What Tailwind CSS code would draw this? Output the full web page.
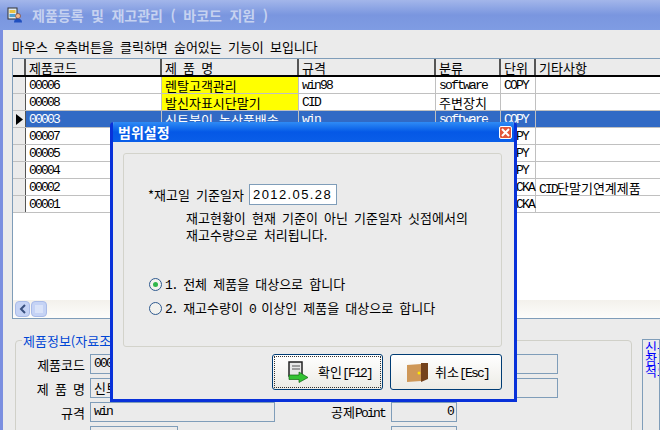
<!DOCTYPE html>
<html lang="ko">
<head>
<meta charset="UTF-8">
<title>제품등록 및 재고관리</title>
<script src="https://cdn.jsdelivr.net/npm/@tailwindcss/browser@4"></script>
</head>
<body class="w-[660px] h-[430px] overflow-hidden relative bg-[#ebebeb] font-['Noto_Sans_CJK_KR',sans-serif] text-[13px] leading-[17px] text-black [word-spacing:2.5px]">

<!-- main window -->
<div class="h-[430px] flex flex-col border-l-[3px] border-[#7b8fe0]">
  <div class="-ml-[3px] h-[30px] shrink-0 flex items-center pl-[7px] gap-[9px] bg-gradient-to-b from-[#a3b6ea] via-[#7a96df] to-[#7f9ce3]">
    <svg width="16" height="16" viewBox="0 0 16 16">
      <rect x="1" y="1" width="9" height="11" fill="#dfe8f0" stroke="#333"/>
      <rect x="2.500" y="3" width="6" height="3" fill="#e8c040"/>
      <rect x="2.500" y="7" width="6" height="3" fill="#50a0d0"/>
      <circle cx="11" cy="9" r="2.500" fill="#f0b890" stroke="#703020" stroke-width="0.6"/>
      <path d="M7 15.500c0-3 2-4 4-4s4 1 4 4z" fill="#2050c0"/>
    </svg>
    <span class="text-[14px] leading-[30px] font-bold text-[#c6d2f0] [word-spacing:3.6px]">제품등록 및 재고관리 ( 바코드 지원 )</span>
  </div>

  <div class="h-[28px] pl-[9px] pt-[8px] shrink-0">마우스 우측버튼을 클릭하면 숨어있는 기능이 보입니다</div>

  <!-- product grid -->
  <div class="ml-[9px] h-[261px] shrink-0 bg-white border border-r-0 border-[#7f9db9] flex flex-col">
    <div class="h-[18px] flex bg-[#ebebeb] border-b-2 border-black">
      <div class="w-[13px] border-r-2 border-[#555]"></div>
      <div class="w-[136px] pl-[3px] border-r-2 border-[#555]">제품코드</div>
      <div class="w-[137px] pl-[3px] border-r-2 border-[#555]">제 품 명</div>
      <div class="w-[137px] pl-[3px] border-r-2 border-[#555]">규격</div>
      <div class="w-[65px] pl-[3px] border-r-2 border-[#555]">분류</div>
      <div class="w-[35px] pl-[3px] border-r-2 border-[#555]">단위</div>
      <div class="pl-[3px]">기타사항</div>
    </div>

    <div class="h-[17px] flex border-b border-[#c0c0c0]">
      <div class="w-[13px] bg-[#ebebeb] border-r border-[#555]"></div>
      <div class="w-[136px] pl-[3px] border-r border-[#c0c0c0] font-['Liberation_Mono'] tracking-[-1.8px]">00006</div>
      <div class="w-[137px] pl-[3px] border-r border-[#c0c0c0] bg-[#ffff00]">렌탈고객관리</div>
      <div class="w-[137px] pl-[3px] border-r border-[#c0c0c0] font-['Liberation_Mono'] tracking-[-1.8px]">win98</div>
      <div class="w-[65px] pl-[3px] border-r border-[#c0c0c0] font-['Liberation_Mono'] tracking-[-1.8px]">software</div>
      <div class="w-[35px] pl-[3px] border-r border-[#c0c0c0] font-['Liberation_Mono'] tracking-[-1.8px]">COPY</div>
      <div class="flex-1"></div>
    </div>
    <div class="h-[17px] flex border-b border-[#c0c0c0]">
      <div class="w-[13px] bg-[#ebebeb] border-r border-[#555]"></div>
      <div class="w-[136px] pl-[3px] border-r border-[#c0c0c0] font-['Liberation_Mono'] tracking-[-1.8px]">00008</div>
      <div class="w-[137px] pl-[3px] border-r border-[#c0c0c0] bg-[#ffff00]">발신자표시단말기</div>
      <div class="w-[137px] pl-[3px] border-r border-[#c0c0c0] font-['Liberation_Mono'] tracking-[-1.8px]">CID</div>
      <div class="w-[65px] pl-[3px] border-r border-[#c0c0c0]">주변장치</div>
      <div class="w-[35px] border-r border-[#c0c0c0]"></div>
      <div class="flex-1"></div>
    </div>
    <div class="h-[17px] flex border-b border-[#c0c0c0] bg-[#316ac5] text-white">
      <div class="w-[13px] bg-[#ebebeb] border-r border-[#555] flex items-center justify-center">
        <svg width="7" height="11" viewBox="0 0 7 11"><path d="M0 0l7 5.500-7 5.500z" fill="#000"/></svg>
      </div>
      <div class="w-[136px] pl-[3px] border-r border-[#c0c0c0] font-['Liberation_Mono'] tracking-[-1.8px]">00003</div>
      <div class="w-[137px] pl-[3px] border-r border-[#c0c0c0]">신토불이 농산품배송</div>
      <div class="w-[137px] pl-[3px] border-r border-[#c0c0c0] font-['Liberation_Mono'] tracking-[-1.8px]">win</div>
      <div class="w-[65px] pl-[3px] border-r border-[#c0c0c0] font-['Liberation_Mono'] tracking-[-1.8px]">software</div>
      <div class="w-[35px] pl-[3px] border-r border-[#c0c0c0] font-['Liberation_Mono'] tracking-[-1.8px]">COPY</div>
      <div class="flex-1"></div>
    </div>
    <div class="h-[17px] flex border-b border-[#c0c0c0]">
      <div class="w-[13px] bg-[#ebebeb] border-r border-[#555]"></div>
      <div class="w-[136px] pl-[3px] border-r border-[#c0c0c0] font-['Liberation_Mono'] tracking-[-1.8px]">00007</div>
      <div class="w-[137px] border-r border-[#c0c0c0]"></div>
      <div class="w-[137px] border-r border-[#c0c0c0]"></div>
      <div class="w-[65px] border-r border-[#c0c0c0]"></div>
      <div class="w-[35px] pl-[3px] border-r border-[#c0c0c0] font-['Liberation_Mono'] tracking-[-1.8px]">COPY</div>
      <div class="flex-1"></div>
    </div>
    <div class="h-[17px] flex border-b border-[#c0c0c0]">
      <div class="w-[13px] bg-[#ebebeb] border-r border-[#555]"></div>
      <div class="w-[136px] pl-[3px] border-r border-[#c0c0c0] font-['Liberation_Mono'] tracking-[-1.8px]">00005</div>
      <div class="w-[137px] border-r border-[#c0c0c0]"></div>
      <div class="w-[137px] border-r border-[#c0c0c0]"></div>
      <div class="w-[65px] border-r border-[#c0c0c0]"></div>
      <div class="w-[35px] pl-[3px] border-r border-[#c0c0c0] font-['Liberation_Mono'] tracking-[-1.8px]">COPY</div>
      <div class="flex-1"></div>
    </div>
    <div class="h-[17px] flex border-b border-[#c0c0c0]">
      <div class="w-[13px] bg-[#ebebeb] border-r border-[#555]"></div>
      <div class="w-[136px] pl-[3px] border-r border-[#c0c0c0] font-['Liberation_Mono'] tracking-[-1.8px]">00004</div>
      <div class="w-[137px] border-r border-[#c0c0c0]"></div>
      <div class="w-[137px] border-r border-[#c0c0c0]"></div>
      <div class="w-[65px] border-r border-[#c0c0c0]"></div>
      <div class="w-[35px] pl-[3px] border-r border-[#c0c0c0] font-['Liberation_Mono'] tracking-[-1.8px]">COPY</div>
      <div class="flex-1"></div>
    </div>
    <div class="h-[17px] flex border-b border-[#c0c0c0]">
      <div class="w-[13px] bg-[#ebebeb] border-r border-[#555]"></div>
      <div class="w-[136px] pl-[3px] border-r border-[#c0c0c0] font-['Liberation_Mono'] tracking-[-1.8px]">00002</div>
      <div class="w-[137px] border-r border-[#c0c0c0]"></div>
      <div class="w-[137px] border-r border-[#c0c0c0]"></div>
      <div class="w-[65px] border-r border-[#c0c0c0]"></div>
      <div class="w-[35px] pl-[3px] border-r border-[#c0c0c0] font-['Liberation_Mono'] tracking-[-1.8px]">PACKA</div>
      <div class="flex-1 pl-[3px]"><span class="font-['Liberation_Mono'] tracking-[-1.8px]">CID</span>단말기연계제품</div>
    </div>
    <div class="h-[17px] flex border-b border-[#c0c0c0]">
      <div class="w-[13px] bg-[#ebebeb] border-r border-[#555]"></div>
      <div class="w-[136px] pl-[3px] border-r border-[#c0c0c0] font-['Liberation_Mono'] tracking-[-1.8px]">00001</div>
      <div class="w-[137px] border-r border-[#c0c0c0]"></div>
      <div class="w-[137px] border-r border-[#c0c0c0]"></div>
      <div class="w-[65px] border-r border-[#c0c0c0]"></div>
      <div class="w-[35px] pl-[3px] border-r border-[#c0c0c0] font-['Liberation_Mono'] tracking-[-1.8px]">PACKA</div>
      <div class="flex-1"></div>
    </div>
    <div class="flex-1"></div>
    <div class="h-[18px] flex items-stretch pl-[2px] py-[1px] gap-[1px] bg-gradient-to-b from-[#f3f1ec] to-[#fdfdfb]">
      <div class="w-[15px] rounded-sm bg-[#c5d3f5] border border-[#a9bbe8] flex items-center justify-center">
        <svg width="8" height="10" viewBox="0 0 8 10"><path d="M6 1L2 5l4 4" fill="none" stroke="#39507f" stroke-width="2"/></svg>
      </div>
      <div class="w-[16px] rounded-sm bg-[#c5d3f5] border border-[#a9bbe8] flex items-center justify-center">
        <svg width="8" height="8" viewBox="0 0 8 8"><path d="M1 0v8M3 0v8M5 0v8M7 0v8" stroke="#eef3fd" stroke-width="1"/></svg>
      </div>
    </div>
  </div>

  <!-- product detail -->
  <div class="flex flex-1 pt-[21px] pl-[12px] gap-[10px] overflow-hidden">
    <div class="relative w-[617px] h-[120px] shrink-0 rounded-t-[4px] border border-[#d0d0c8] pl-[1px]">
      <span class="absolute left-[6px] -top-[9px] bg-[#ebebeb] px-[1px] text-[#0046d5]">제품정보(자료조회)</span>
      <div class="pt-[13px] flex flex-col gap-[4px]">
        <div class="flex items-center h-[20px]">
          <span class="w-[68px] text-right">제품코드</span>
          <span class="ml-[5px] h-[20px] w-[468px] border border-[#7f9db9] pl-[3px] font-['Liberation_Mono'] tracking-[-1.8px]">00003</span>
        </div>
        <div class="flex items-center h-[20px]">
          <span class="w-[68px] text-right">제 품 명</span>
          <span class="ml-[5px] h-[20px] w-[468px] border border-[#7f9db9] pl-[3px]">신토불이 농산품배송</span>
        </div>
        <div class="flex items-center h-[20px]">
          <span class="w-[68px] text-right">규격</span>
          <span class="ml-[5px] h-[20px] w-[185px] border border-[#7f9db9] pl-[3px] font-['Liberation_Mono'] tracking-[-1.8px]">win</span>
          <span class="w-[110px] text-right">공제<span class="font-['Liberation_Mono'] tracking-[-1.8px]">Point</span></span>
          <span class="ml-[6px] h-[20px] w-[66px] border border-[#7f9db9] pr-[3px] text-right font-['Liberation_Mono'] tracking-[-1.8px]">0</span>
        </div>
        <div class="flex items-center h-[20px]">
          <span class="w-[68px] text-right">분류</span>
          <span class="ml-[5px] h-[20px] w-[88px] border border-[#7f9db9]"></span>
          <span class="w-[207px] text-right">판매단가</span>
          <span class="ml-[6px] h-[20px] w-[66px] border border-[#7f9db9]"></span>
        </div>
      </div>
    </div>
    <div class="w-[40px] h-[120px] -mt-[1px] border border-[#7f9db9] pl-[2px] pt-[1px] text-[#0000ff] leading-[12px] overflow-hidden whitespace-nowrap">신규<br>참고<br>적요</div>
  </div>
</div>

<!-- range dialog -->
<div class="absolute left-[110px] top-[122px] w-[407px] h-[280px] flex flex-col rounded-t-[4px] border-x-[3px] border-b-[3px] border-[#0831d9] bg-[#ebebeb] overflow-hidden">
  <div class="-mx-[3px] h-[20px] shrink-0 flex items-center justify-between pl-[8px] pr-[5px] bg-gradient-to-b from-[#2f8bf5] via-[#0558e6] to-[#0a5ee8]">
    <span class="text-[14px] font-bold text-white [word-spacing:0]">범위설정</span>
    <span class="w-[13px] h-[13px] rounded-[2px] border border-white bg-[#e2563a] flex items-center justify-center">
      <svg width="9" height="9" viewBox="0 0 9 9"><path d="M1 1l7 7M8 1L1 8" stroke="#fff" stroke-width="2"/></svg>
    </span>
  </div>
  <div class="flex-1 pl-[10px] pr-[12px] pt-[11px] flex flex-col">
    <div class="h-[194px] rounded-[3px] border border-[#d3d3cb] shrink-0">
      <div class="mt-[30px] flex items-center h-[21px] pl-[24px]">
        <span class="w-[101px] whitespace-nowrap">*재고일 기준일자</span>
        <span class="w-[88px] h-[21px] border border-[#7f9db9] bg-white pl-[3px] leading-[19px] font-['Liberation_Sans'] tracking-[1.4px]">2012.05.28</span>
      </div>
      <p class="mt-[4px] pl-[62px]">재고현황이 현재 기준이 아닌 기준일자 싯점에서의</p>
      <p class="pl-[62px]">재고수량으로 처리됩니다.</p>
      <div class="mt-[33px] flex items-center h-[17px] pl-[25px]">
        <span class="w-[13px] h-[13px] rounded-full border border-[#2f5a8f] bg-[#f2f2ee] flex items-center justify-center">
          <span class="w-[5px] h-[5px] rounded-full bg-[#2fb54a]"></span>
        </span>
        <span class="ml-[3px]"><span class="font-['Liberation_Mono'] tracking-[-1.8px]">1.</span> 전체 제품을 대상으로 합니다</span>
      </div>
      <div class="mt-[7px] flex items-center h-[17px] pl-[25px]">
        <span class="w-[13px] h-[13px] rounded-full border border-[#2f5a8f] bg-[#f2f2ee]"></span>
        <span class="ml-[3px]"><span class="font-['Liberation_Mono'] tracking-[-1.8px]">2.</span> 재고수량이 <span class="font-['Liberation_Mono'] tracking-[-1.8px]">0</span> 이상인 제품을 대상으로 합니다</span>
      </div>
    </div>
    <div class="mt-[7px] flex justify-end gap-[7px]">
      <button class="w-[111px] h-[36px] rounded-[3px] border border-[#003c74] bg-gradient-to-b from-white to-[#ecebe5] p-[1px]">
        <span class="h-full flex items-center pl-[12px] gap-[9px] border border-dotted border-[#333]">
          <svg width="22" height="22" viewBox="0 0 22 22">
            <path d="M2 1h13v14H2z" fill="#e8e8e8" stroke="#222" stroke-width="1.500"/>
            <path d="M5 5h8M5 8h8" stroke="#555"/>
            <path d="M2 14h10v-3l9 5.500-9 5v-3H2z" fill="#33c233" stroke="#116611" stroke-width="0.7"/>
          </svg>
          <span>확인<span class="font-['Liberation_Mono'] tracking-[-1.8px]">[F12]</span></span>
        </span>
      </button>
      <button class="w-[112px] h-[36px] rounded-[3px] border border-[#003c74] bg-gradient-to-b from-white to-[#ecebe5] p-[1px]">
        <span class="h-full flex items-center pl-[15px] gap-[7px]">
          <svg width="21" height="21" viewBox="0 0 21 21">
            <path d="M0 3l14-1v17L0 20z" fill="#cf9858"/>
            <path d="M14 1h7v16l-7 3z" fill="#74421c"/>
            <circle cx="12" cy="11" r="1.500" fill="#ffe600"/>
          </svg>
          <span>취소<span class="font-['Liberation_Mono'] tracking-[-1.8px]">[Esc]</span></span>
        </span>
      </button>
    </div>
  </div>
</div>
</body>
</html>
